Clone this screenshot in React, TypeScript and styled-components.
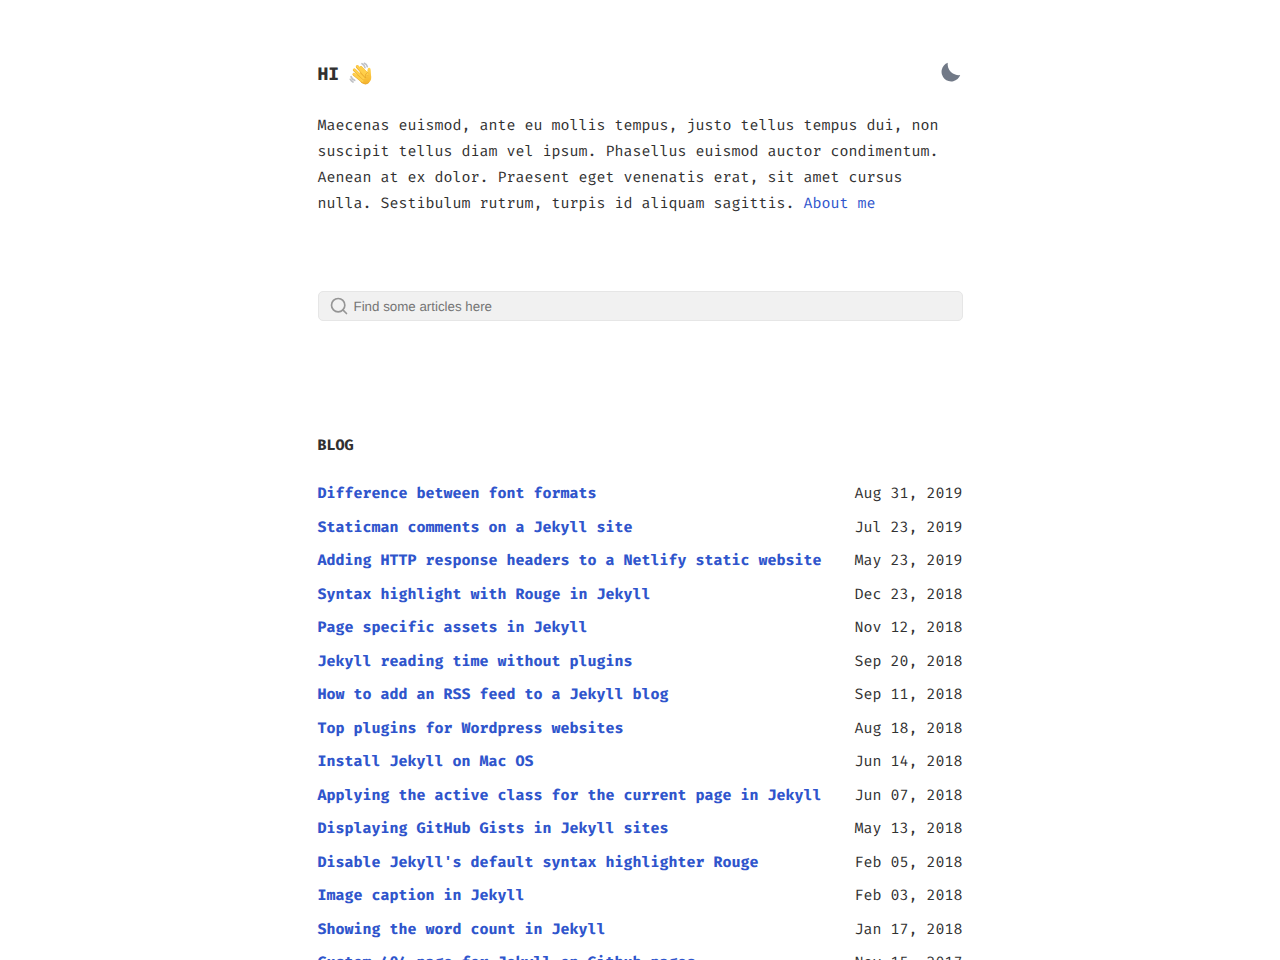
import React from "react";
import styled, { createGlobalStyle } from "styled-components";

const GlobalStyle = createGlobalStyle`
  *, *::before, *::after { box-sizing: border-box; }
  body {
    margin: 0;
    background: #fff;
    color: #313131;
    font-family: "Fira Mono", "DejaVu Sans Mono", monospace;
    font-size: 15px;
    line-height: 26px;
    text-rendering: geometricPrecision;
    -webkit-font-smoothing: antialiased;
  }
`;

const Page = styled.main`
  max-width: 685px;
  margin: 0 auto;
  padding: 60px 20px;
`;

const Header = styled.header`
  display: flex;
  align-items: flex-start;
  justify-content: space-between;
  margin-bottom: 24px;
`;

const Greeting = styled.h1`
  display: flex;
  align-items: center;
  gap: 10px;
  margin: 0;
  font-size: 18px;
  line-height: 28px;
`;

const ThemeButton = styled.button`
  display: flex;
  padding: 0;
  border: 0;
  background: none;
  color: #717987;
  cursor: pointer;
`;

const Intro = styled.p`
  margin: 0 0 75px;
`;

const TextLink = styled.a`
  color: #2f55cc;
  text-decoration: none;
`;

const SearchBox = styled.label`
  display: flex;
  align-items: center;
  gap: 5px;
  height: 30px;
  margin-bottom: 111px;
  padding: 0 10px;
  border: 1px solid #e6e6e6;
  border-radius: 5px;
  background: #f1f1f1;
  color: #959595;
`;

const SearchInput = styled.input`
  flex: 1;
  min-width: 0;
  padding: 0;
  border: 0;
  outline: 0;
  background: transparent;
  color: #313131;
  font-family: "Liberation Sans", Arial, sans-serif;
  text-rendering: geometricPrecision;
  &::placeholder { color: #757575; opacity: 1; }
`;

const SectionTitle = styled.h2`
  margin: 0 0 22px;
  font-size: 15px;
  line-height: 26px;
`;

const PostList = styled.ul`
  margin: 0;
  padding: 0;
  list-style: none;
`;

const PostRow = styled.li`
  display: flex;
  justify-content: space-between;
  gap: 20px;
  margin-bottom: 7px;
  &:nth-child(odd) { margin-bottom: 8px; }
`;

const PostLink = styled(TextLink)`
  font-weight: 700;
`;

const PostDate = styled.time`
  white-space: nowrap;
`;

const posts = [
  ["Difference between font formats", "Aug 31, 2019"],
  ["Staticman comments on a Jekyll site", "Jul 23, 2019"],
  ["Adding HTTP response headers to a Netlify static website", "May 23, 2019"],
  ["Syntax highlight with Rouge in Jekyll", "Dec 23, 2018"],
  ["Page specific assets in Jekyll", "Nov 12, 2018"],
  ["Jekyll reading time without plugins", "Sep 20, 2018"],
  ["How to add an RSS feed to a Jekyll blog", "Sep 11, 2018"],
  ["Top plugins for Wordpress websites", "Aug 18, 2018"],
  ["Install Jekyll on Mac OS", "Jun 14, 2018"],
  ["Applying the active class for the current page in Jekyll", "Jun 07, 2018"],
  ["Displaying GitHub Gists in Jekyll sites", "May 13, 2018"],
  ["Disable Jekyll's default syntax highlighter Rouge", "Feb 05, 2018"],
  ["Image caption in Jekyll", "Feb 03, 2018"],
  ["Showing the word count in Jekyll", "Jan 17, 2018"],
  ["Custom 404 page for Jekyll on Github pages", "Nov 15, 2017"],
];

function WavingHand() {
  return (
    <svg width="24" height="24" viewBox="0 0 72 72" role="img" aria-label="Waving hand">
      <defs>
        <linearGradient id="skin" x1="0" y1="0" x2="0" y2="1">
          <stop offset="0" stopColor="#ffd34f" />
          <stop offset="1" stopColor="#f5b32c" />
        </linearGradient>
      </defs>
      <g fill="none" stroke="#bfc1c5" strokeWidth="5" strokeLinecap="round">
        <path d="M39 5Q46 8 48 17M46 4Q53 7 55 14M6 44Q9 52 17 55M4 52Q7 57 12 60" />
      </g>
      <path d="M23 40L36 61Q50 72 61 61Q69 53 66 39L65 23Q64 15 58 18Q55 20 55 32L42 24Z" fill="url(#skin)" />
      <g fill="none" strokeLinecap="round">
        <path d="M15 37L38 56M16 24L43 49M25 14L49 42M36 17L55 37" stroke="#e9a92e" strokeWidth="9" />
        <path d="M15 36L40 57M16 23L44 49M25 13L50 42M36 16L56 37" stroke="#ffcf4a" strokeWidth="7" />
      </g>
      <path d="M56 31Q46 37 49 48" fill="none" stroke="#dfa028" strokeWidth="2" />
      <path d="M36 60Q50 71 60 61" fill="none" stroke="#e9a92e" strokeWidth="3" />
    </svg>
  );
}

function MoonIcon() {
  return (
    <svg width="24" height="24" viewBox="0 0 24 24" fill="currentColor" aria-hidden="true">
      <path d="M8.8 2.8A9.6 9.6 0 1 0 21.2 15A10.8 10.8 0 0 1 8.8 2.8Z" />
    </svg>
  );
}

function SearchIcon() {
  return (
    <svg width="20" height="20" viewBox="0 0 24 24" fill="none" stroke="currentColor" strokeWidth="2" strokeLinecap="round" strokeLinejoin="round" aria-hidden="true">
      <circle cx="11" cy="11" r="8" />
      <path d="M21 21l-4.35-4.35" />
    </svg>
  );
}

export default function App() {
  return (
    <>
      <GlobalStyle />
      <Page>
        <Header>
          <Greeting>HI <WavingHand /></Greeting>
          <ThemeButton type="button" aria-label="Toggle dark mode"><MoonIcon /></ThemeButton>
        </Header>
        <Intro>
          Maecenas euismod, ante eu mollis tempus, justo tellus tempus dui, non suscipit tellus diam vel ipsum. Phasellus euismod auctor condimentum. Aenean at ex dolor. Praesent eget venenatis erat, sit amet cursus nulla. Sestibulum rutrum, turpis id aliquam sagittis. <TextLink href="#about">About me</TextLink>
        </Intro>
        <SearchBox>
          <SearchIcon />
          <SearchInput type="text" aria-label="Search articles" placeholder="Find some articles here" />
        </SearchBox>
        <section>
          <SectionTitle>BLOG</SectionTitle>
          <PostList>
            {posts.map(([title, date]) => (
              <PostRow key={title}>
                <PostLink href="#post">{title}</PostLink>
                <PostDate>{date}</PostDate>
              </PostRow>
            ))}
          </PostList>
        </section>
      </Page>
    </>
  );
}
